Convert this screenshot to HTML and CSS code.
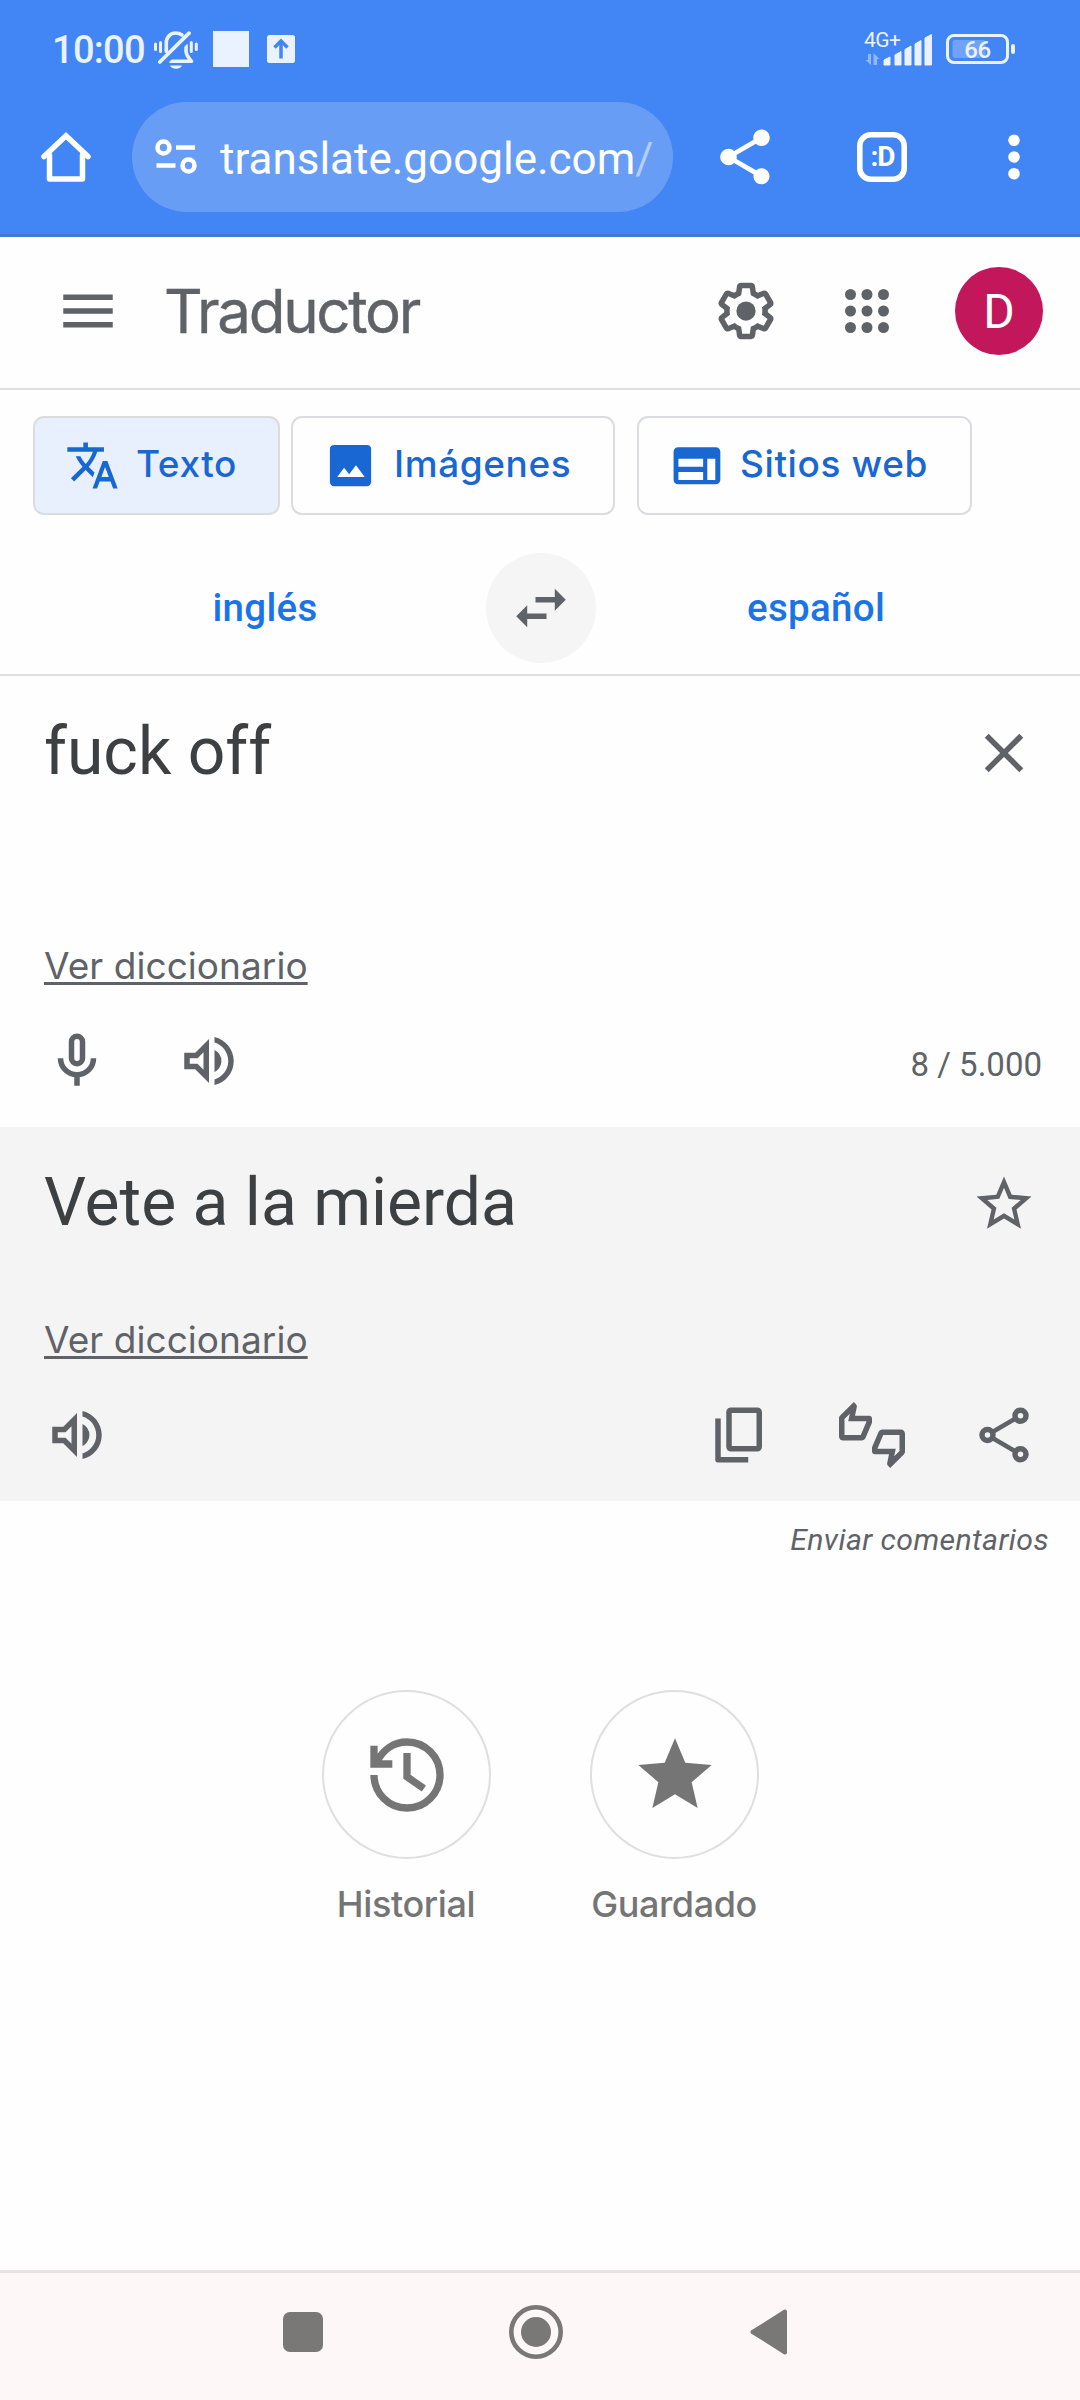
FILE: index.html
```html
<!DOCTYPE html>
<html lang="es">
<head>
<meta charset="utf-8">
<title>Traductor</title>
<link rel="stylesheet" href="styles.css">
</head>
<body>
<svg class="defs" width="0" height="0" aria-hidden="true">
  <symbol id="volume" viewBox="0 0 24 24"><path d="M14 3.23v2.06c2.89.86 5 3.54 5 6.71s-2.11 5.84-5 6.7v2.07c4-.91 7-4.49 7-8.77s-3-7.86-7-8.77zM16.5 12A4.5 4.5 0 0 0 14 7.97v8.05c1.48-.73 2.5-2.25 2.5-4.02zM3 9v6h4l5 5V4L7 9H3zm7-.17v6.34L7.83 13H5v-2h2.83L10 8.83z"/></symbol>
</svg>
<div class="browser">
  <div class="status">
    <span class="clock">10:00</span>
    <svg class="bell" width="44" height="38" viewBox="0 0 44 38" fill="none" stroke="#eaf2ff" stroke-linecap="round" stroke-linejoin="round">
      <path stroke-width="3.6" d="M12.3 20.5V12C12.3 6 16.500 2 21.600 2c2.500 0 4.700.7 6.400 2M32 14v6c0 4 2 6 5.500 10.300H16.500"/>
      <path stroke="#4285f4" stroke-width="8" stroke-linecap="butt" d="M9 31.500L33 7.500"/>
      <path stroke-width="3.800" d="M5.800 31L35 2.200"/>
      <path stroke-width="3" d="M1.500 13v5.500M6.500 11.500v9M37.300 11.500v9M42.300 13v5.500"/>
      <path fill="#eaf2ff" stroke="none" d="M16 34.500h12c-1.500 4.300-10.500 4.300-12 0z"/>
    </svg>
    <span class="block"></span>
    <svg class="upbox" width="28" height="28" viewBox="0 0 28 28"><rect width="28" height="28" rx="2.500" fill="#eaf2ff"/><path d="M14 23.500V6.500M7.500 12.500L14 6l6.500 6.500" fill="none" stroke="#4285f4" stroke-width="3.500"/></svg>
    <svg class="signal" width="69" height="48" viewBox="0 -12 69 48" fill="#eaf2ff">
      <text x="0" y="15.500" class="net">4G+</text>
      <path fill="#8fb7fb" d="M4 23v-0h3v11L1.500 29H4zM9.500 34V22l6 6H13v6z"/>
      <path d="M20 34V29l6-3v8zM31 34V24l6-3.500V34zM41 34V18.500l6-3.500V34zM51 34V13l6-3.500V34zM61 34V7l6.500-3.500V34z" stroke="#eaf2ff" stroke-width="1" stroke-linejoin="round"/>
    </svg>
    <svg class="battery" width="69" height="30" viewBox="0 0 69 30"><rect x="1.500" y="1.500" width="60" height="27" rx="6.500" fill="none" stroke="#eaf2ff" stroke-width="3"/><rect x="6.500" y="6" width="33" height="18" rx="2.500" fill="#6fa2f8"/><rect x="65" y="10" width="4" height="10" rx="2" fill="#eaf2ff"/><text x="31.500" y="24" class="level">66</text></svg>
  </div>
  <div class="toolbar">
    <svg class="home" width="50" height="50" viewBox="0 0 50 50" fill="none" stroke="#fff" stroke-width="5.500" stroke-linecap="round" stroke-linejoin="round"><path stroke-linejoin="miter" d="M3 24.500L25 3.800l22 20.700"/><path d="M8.500 23v24h33V23"/></svg>
    <div class="omnibox">
      <svg width="42" height="36" viewBox="0 0 42 36" fill="none" stroke="#fff" stroke-width="4.600"><circle cx="8.500" cy="8.500" r="6"/><circle cx="33.500" cy="26.500" r="6"/><path d="M21 8.500h19M1.500 26.500h19"/></svg>
      <span class="url">translate.google.com<span class="slash">/</span></span>
    </div>
    <svg class="share" width="66" height="66" viewBox="0 0 24 24" fill="#fff"><path d="M18 16.080c-.76 0-1.440.3-1.960.77L8.910 12.700c.05-.23.09-.46.09-.7s-.04-.47-.09-.7l7.050-4.110c.54.5 1.250.81 2.040.81 1.660 0 3-1.340 3-3s-1.340-3-3-3-3 1.340-3 3c0 .24.04.47.09.7L8.040 9.810C7.500 9.310 6.790 9 6 9c-1.660 0-3 1.340-3 3s1.340 3 3 3c.79 0 1.500-.31 2.040-.81l7.120 4.160c-.05.21-.08.43-.08.65 0 1.610 1.310 2.920 2.920 2.920s2.920-1.310 2.920-2.920-1.310-2.920-2.920-2.920z"/></svg>
    <svg class="tabs" width="50" height="50" viewBox="0 0 50 50"><rect x="2.800" y="2.800" width="44.400" height="44.400" rx="11" fill="none" stroke="#fff" stroke-width="5.600"/><text x="25.500" y="34" class="count">:D</text></svg>
    <svg class="more" width="12" height="46" viewBox="0 0 12 46" fill="#fff"><circle cx="6" cy="6.300" r="5.800"/><circle cx="6" cy="23" r="5.800"/><circle cx="6" cy="39.700" r="5.800"/></svg>
  </div>
</div>

<header class="header">
  <svg width="66" height="66" viewBox="0 0 24 24" fill="#5f6368"><path d="M3 18h18v-2H3v2zm0-5h18v-2H3v2zm0-7v2h18V6H3z"/></svg>
  <h1 class="title">Traductor</h1>
  <svg width="66" height="66" viewBox="0 0 24 24" fill="#5f6368"><path d="M13.850 22.250h-3.700c-.74 0-1.360-.54-1.450-1.270l-.27-1.890c-.27-.14-.53-.29-.79-.46l-1.800.72c-.7.26-1.470-.03-1.810-.65L2.200 15.530c-.35-.66-.2-1.440.36-1.880l1.530-1.190c-.01-.15-.02-.3-.02-.46 0-.15.01-.31.02-.46l-1.520-1.190c-.59-.45-.74-1.260-.37-1.880l1.850-3.190c.34-.62 1.110-.9 1.790-.63l1.810.73c.26-.17.52-.32.78-.46l.27-1.910c.09-.7.71-1.250 1.440-1.250h3.700c.74 0 1.360.54 1.450 1.270l.27 1.890c.27.14.53.29.79.46l1.800-.72c.71-.26 1.480.03 1.820.65l1.840 3.180c.36.66.2 1.440-.36 1.880l-1.520 1.190c.01.15.02.3.02.46s-.01.31-.02.46l1.520 1.190c.56.45.72 1.230.37 1.860l-1.860 3.220c-.34.62-1.110.9-1.800.63l-1.800-.72c-.26.17-.52.32-.78.46l-.27 1.910c-.1.68-.72 1.220-1.460 1.220zm-3.230-2h2.760l.37-2.550.53-.22c.44-.18.88-.44 1.340-.78l.45-.34 2.380.96 1.380-2.400-2.030-1.580.07-.56c.03-.26.06-.51.06-.78s-.03-.53-.06-.78l-.07-.56 2.030-1.580-1.390-2.400-2.390.96-.45-.35c-.42-.32-.87-.58-1.330-.77l-.52-.22-.37-2.550h-2.760l-.37 2.550-.53.21c-.44.19-.88.44-1.340.79l-.45.33-2.380-.95-1.390 2.390 2.030 1.580-.07.56a7 7 0 0 0-.06.79c0 .26.02.53.06.78l.07.56-2.030 1.580 1.380 2.400 2.390-.96.45.35c.43.33.86.58 1.330.77l.53.22.38 2.550z"/><circle cx="12" cy="12" r="3.500"/></svg>
  <svg width="66" height="66" viewBox="0 0 24 24" fill="#5f6368"><circle cx="6" cy="6" r="2"/><circle cx="12" cy="6" r="2"/><circle cx="18" cy="6" r="2"/><circle cx="6" cy="12" r="2"/><circle cx="12" cy="12" r="2"/><circle cx="18" cy="12" r="2"/><circle cx="6" cy="18" r="2"/><circle cx="12" cy="18" r="2"/><circle cx="18" cy="18" r="2"/></svg>
  <span class="avatar">D</span>
</header>

<nav class="chips">
  <a class="chip chip-text active"><svg width="55" height="55" viewBox="0 0 24 24"><path d="M12.870 15.070l-2.540-2.510.03-.03c1.740-1.940 2.980-4.170 3.710-6.530H17V4h-7V2H8v2H1v1.990h11.170C11.500 7.920 10.440 9.750 9 11.350 8.070 10.320 7.300 9.190 6.690 8h-2c.73 1.630 1.730 3.170 2.980 4.560l-5.090 5.020L4 19l5-5 3.110 3.110.76-2.040zM18.500 10h-2L12 22h2l1.120-3h4.750L21 22h2l-4.500-12zm-2.620 7l1.620-4.330L19.120 17h-3.240z"/></svg><span>Texto</span></a>
  <a class="chip chip-images"><svg width="55" height="55" viewBox="0 0 24 24"><path fill-rule="evenodd" d="M4.800 3h14.400A1.800 1.800 0 0 1 21 4.800v14.400a1.800 1.800 0 0 1-1.800 1.800H4.800A1.800 1.800 0 0 1 3 19.200V4.800A1.800 1.800 0 0 1 4.800 3zM6.200 17h12l-3.800-5.100-3 3.900-2.200-2.800z"/></svg><span>Imágenes</span></a>
  <a class="chip chip-sites"><svg width="55" height="55" viewBox="0 0 24 24"><path fill-rule="evenodd" d="M4 4h16.400a2 2 0 0 1 2 2v12.200a2 2 0 0 1-2 2H4a2 2 0 0 1-2-2V6a2 2 0 0 1 2-2zM4.100 9.100v3.400h10.800V9.100zM4.100 14.800v3.500h10.800v-3.500zM16.700 9.100v9.200h3.500V9.100z"/></svg><span>Sitios web</span></a>
</nav>

<div class="languages">
  <span class="language">inglés</span>
  <span class="swap"><svg width="66" height="66" viewBox="0 0 24 24" fill="#5f6368"><path d="M6.990 11L3 15l3.990 4v-3H14v-2H6.990v-3zM21 9l-3.990-4v3H10v2h7.010v3L21 9z"/></svg></span>
  <span class="language">español</span>
</div>

<section class="panel source">
  <div class="line"><p class="phrase">fuck off</p><svg width="66" height="66" viewBox="0 0 24 24"><path d="M19 6.410L17.590 5 12 10.590 6.410 5 5 6.410 10.590 12 5 17.590 6.410 19 12 13.410 17.590 19 19 17.590 13.410 12z"/></svg></div>
  <a class="dictionary">Ver diccionario</a>
  <div class="actions">
    <svg width="66" height="66" viewBox="0 0 24 24"><g fill="none" stroke="#5f6368" stroke-width="2"><rect x="10" y="3" width="4" height="10" rx="2"/><path d="M6 11a6 6 0 0 0 12 0M12 17v4"/></g></svg>
    <svg class="listen" width="66" height="66"><use href="#volume"/></svg>
    <span class="counter">8 / 5.000</span>
  </div>
</section>

<section class="panel target">
  <div class="line"><p class="phrase">Vete a la mierda</p><svg width="66" height="66" viewBox="0 0 24 24"><path d="M22 9.240l-7.190-.62L12 2 9.190 8.630 2 9.240l5.460 4.730L5.820 21 12 17.270 18.180 21l-1.630-7.030L22 9.240zM12 15.400l-3.760 2.270 1-4.280-3.320-2.880 4.380-.38L12 6.100l1.710 4.040 4.380.38-3.320 2.880 1 4.280L12 15.400z"/></svg></div>
  <a class="dictionary">Ver diccionario</a>
  <div class="actions">
    <svg width="66" height="66"><use href="#volume"/></svg>
    <svg class="copy" width="66" height="66" viewBox="0 0 24 24"><g fill="none" stroke="#5f6368" stroke-width="2" stroke-linejoin="round"><rect x="8" y="3" width="11" height="14" rx=".7"/><path d="M4 6v15h11"/></g></svg>
    <svg width="66" height="66" viewBox="0 0 24 24"><path d="M12 6c0-.55-.45-1-1-1H5.820l.66-3.180.02-.23c0-.31-.13-.59-.33-.8L5.380 0 .44 4.940C.17 5.210 0 5.590 0 6v6.500c0 .83.67 1.500 1.500 1.500h6.750c.62 0 1.150-.38 1.380-.91l2.260-5.290c.07-.17.11-.36.11-.55V6zm-2 1.130L7.920 12H2V6.210l1.930-1.930L3.360 7H10v.13zM22.500 10h-6.750c-.62 0-1.150.38-1.380.91l-2.260 5.290c-.07.17-.11.36-.11.55V18c0 .55.45 1 1 1h5.180l-.66 3.180-.02.24c0 .31.13.59.33.8l.79.78 4.940-4.940c.27-.27.44-.65.44-1.060v-6.500c0-.83-.67-1.500-1.500-1.500zm-.5 7.790l-1.930 1.930.57-2.720H14v-.13L16.080 12H22v5.790z"/></svg>
    <svg width="66" height="66" viewBox="0 0 24 24"><g fill="none" stroke="#5f6368" stroke-width="2"><circle cx="18" cy="5" r="2"/><circle cx="6" cy="12" r="2"/><circle cx="18" cy="19" r="2"/><path stroke-width="1.600" d="M7.800 10.900l8.400-4.900M7.800 13.100l8.400 4.900"/></g></svg>
  </div>
</section>

<a class="feedback">Enviar comentarios</a>

<div class="shortcuts">
  <a class="shortcut"><span class="ring"><svg width="88" height="88" viewBox="0 0 24 24" fill="none" stroke="#757575" stroke-width="2"><path d="M3 12a9 9 0 1 0 9-9c-3.500 0-6.500 2-8.300 5.500M3 4v5h5M12 6v6.500l4.600 3.200"/></svg></span><span class="label">Historial</span></a>
  <a class="shortcut"><span class="ring"><svg width="88" height="88" viewBox="0 0 24 24" fill="#757575"><path d="M12 17.270L18.180 21l-1.640-7.030L22 9.240l-7.190-.61L12 2 9.190 8.630 2 9.240l5.460 4.730L5.820 21z"/></svg></span><span class="label">Guardado</span></a>
</div>

<footer class="system">
  <span class="recents"></span>
  <svg class="circle" width="54" height="54" viewBox="0 0 54 54"><circle cx="27" cy="27" r="24.700" fill="none" stroke="#7a7777" stroke-width="4.600"/><circle cx="27" cy="27" r="15" fill="#7a7777"/></svg>
  <svg class="back" width="38" height="46" viewBox="0 0 38 46"><path d="M2.500 23L35 2.500v41z" fill="#7a7777" stroke="#7a7777" stroke-width="4" stroke-linejoin="round"/></svg>
</footer>
</body>
</html>
```
FILE: styles.css
```css
* { box-sizing: border-box; }
body {
  margin: 0;
  width: 1080px;
  height: 2400px;
  display: flex;
  flex-direction: column;
  background: #fefefe;
  font-family: Roboto, sans-serif;
  overflow: hidden;
}
svg { display: block; flex: none; }
.defs { display: none; }

/* Status bar and browser toolbar */
.browser { height: 237px; background: #4285f4; border-bottom: 3px solid #4577cd; flex: none; }
.status { height: 100px; padding: 0 65px 0 52px; display: flex; align-items: center; color: #eaf2ff; }
.clock { width: 102px; font-size: 38px; font-weight: 500; line-height: 44px; letter-spacing: -.7px; }
.block { width: 36px; height: 36px; margin: 0 18px 2px 15px; background: #eaf2ff; }
.upbox { margin-bottom: 2px; }
.signal { margin-left: auto; margin-bottom: 14px; }
.net { font-size: 21px; letter-spacing: -.5px; }
.battery { margin-left: 13px; margin-bottom: 2px; }
.level { font-size: 24px; font-weight: 500; fill: #eaf2ff; text-anchor: middle; letter-spacing: -.5px; }
.toolbar { height: 114px; padding-left: 41px; display: flex; align-items: center; }
.omnibox { width: 541px; height: 110px; margin-left: 41px; padding-left: 23px; border-radius: 55px; background: #689df6; display: flex; align-items: center; }
.url { margin-left: 23px; padding-top: 3px; font-size: 44px; line-height: 52px; color: #fff; white-space: nowrap; }
.slash { color: #b4cefb; }
.share { margin-left: 39px; }
.tabs { margin-left: 79px; }
.count { font-size: 28px; font-weight: 700; fill: #fff; text-anchor: middle; letter-spacing: -1px; }
.more { margin-left: 101px; }

/* Translator header */
.header { height: 153px; padding: 0 37px 3px 55px; border-bottom: 2px solid #dedfe0; display: flex; align-items: center; gap: 55px; flex: none; }
.title { flex: 1; margin: 0 0 0 -12px; font: 400 60px/74px Inter, sans-serif; letter-spacing: -2.3px; color: #5f6368; -webkit-text-stroke: .4px #5f6368; }
.avatar { width: 88px; height: 88px; border-radius: 50%; background: #c2185b; color: #fff; font-size: 48px; line-height: 90px; text-align: center; }

.chips { height: 125px; padding: 26px 0 0 33px; display: flex; flex: none; }
.chip { height: 99px; border: 2px solid #dadce0; border-radius: 11px; display: flex; align-items: center; fill: #1967d2; color: #1967d2; font: 500 37px/46px Inter, sans-serif; letter-spacing: .6px; white-space: nowrap; }
.chip svg { margin-right: 16px; }
.chip span { margin-bottom: 4px; }
.chip-text { width: 247px; padding-left: 30px; margin-right: 11px; }
.chip-images { width: 324px; padding-left: 30px; margin-right: 22px; }
.chip-sites { width: 335px; padding-left: 30px; }
.active { background: #e8f0fe; }

.languages { height: 161px; padding: 26px 43px 0 45px; border-bottom: 2px solid #dedfe0; display: flex; align-items: center; flex: none; }
.language { flex: 1; padding-right: 1px; text-align: center; font-size: 38.5px; font-weight: 500; line-height: 46px; letter-spacing: .3px; color: #1a73e8; }
.swap { width: 110px; height: 110px; border-radius: 50%; background: #f5f5f5; display: flex; align-items: center; justify-content: center; }

/* Source and translation panels */
.panel { padding: 0 38px 0 44px; display: flex; flex-direction: column; align-items: flex-start; fill: #5f6368; color: #5f6368; flex: none; }
.source { height: 451px; padding-top: 44px; }
.target { height: 374px; padding-top: 44px; background: #f4f4f4; }
.line { align-self: stretch; padding-right: 5px; display: flex; justify-content: space-between; }
.phrase { margin: -7px 0 0; font-size: 66px; line-height: 78px; color: #3c4043; }
.dictionary { font: 400 37px/46px Inter, sans-serif; letter-spacing: .05px; text-decoration: underline; text-decoration-thickness: 3px; text-underline-offset: 3px; }
.source .dictionary { margin-top: 152px; }
.target .dictionary { margin-top: 75px; }
.actions { align-self: stretch; margin-top: 39px; display: flex; align-items: center; }
.listen { margin-left: 66px; }
.counter { margin-left: auto; font-size: 33px; line-height: 40px; padding-top: 7px; }
.copy { margin-left: auto; }
.target .actions { gap: 66px; padding-right: 5px; }

.feedback { margin: 19px 31px 0 0; align-self: flex-end; font-size: 30.25px; font-style: italic; line-height: 40px; letter-spacing: .4px; color: #5f6368; }

.shortcuts { margin-top: 130px; display: flex; justify-content: center; gap: 99px; }
.shortcut { width: 169px; display: flex; flex-direction: column; align-items: center; }
.ring { width: 169px; height: 169px; padding-left: 2px; border: 2px solid #dfdfdf; border-radius: 50%; display: flex; align-items: center; justify-content: center; }
.label { margin-top: 22px; font: 500 36px/46px Inter, sans-serif; letter-spacing: -.4px; color: #757575; white-space: nowrap; }

.system { height: 130px; margin-top: auto; padding-left: 283px; border-top: 3px solid #ebdfe1; background: #fdf7f7; display: flex; align-items: flex-start; flex: none; }
.recents { width: 40px; height: 40px; margin-top: 39px; border-radius: 7px; background: #7a7777; }
.circle { margin: 32px 0 0 186px; }
.back { margin: 36px 0 0 187px; }
```
